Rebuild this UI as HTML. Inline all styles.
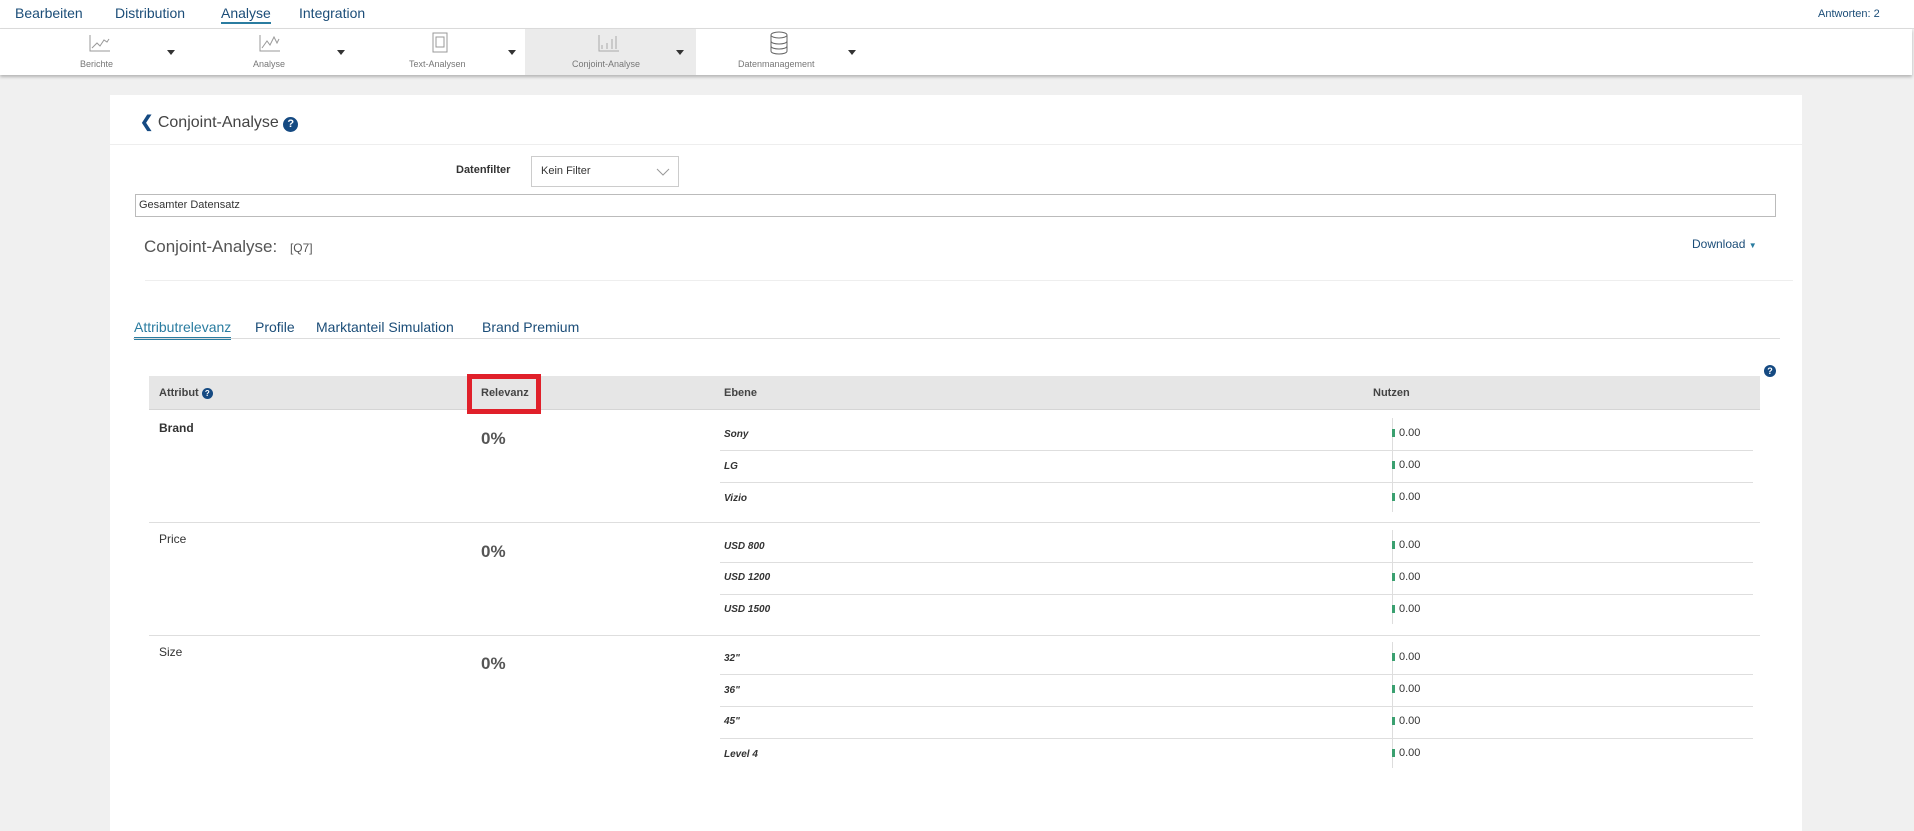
<!DOCTYPE html>
<html><head><meta charset="utf-8"><style>
*{margin:0;padding:0;box-sizing:border-box}
body{width:1914px;height:831px;overflow:hidden;background:#f0f0f0;font-family:"Liberation Sans",sans-serif;position:relative;color:#333}
.a{position:absolute;white-space:nowrap}
.nav{color:#1b4d78;font-size:14px;top:5px}
.tb{color:#777;font-size:9px;top:59px}
.car{width:0;height:0;border-left:4px solid transparent;border-right:4px solid transparent;border-top:5px solid #333;position:absolute;top:50px}
.lv{font-style:italic;font-weight:bold;font-size:10px;color:#333}
.v{font-size:11px;color:#333}
.bar{position:absolute;width:3px;height:8px;background:#3aa070}
.ln{position:absolute;height:1px;background:#dedede}
.q{display:inline-block;width:12px;height:12px;border-radius:50%;background:#154a82;color:#fff;font-size:9px;font-weight:bold;text-align:center;line-height:12px}
</style></head><body>
<div class="a" style="left:0;top:0;width:1914px;height:29px;background:#fff;border-bottom:1px solid #ddd"></div>
<div class="a nav" style="left:15px">Bearbeiten</div>
<div class="a nav" style="left:115px">Distribution</div>
<div class="a nav" style="left:221px;border-bottom:2px solid #2a7ca0;padding-bottom:1px">Analyse</div>
<div class="a nav" style="left:299px">Integration</div>
<div class="a" style="left:1818px;top:8px;font-size:11px;color:#1b4d78">Antworten: 2</div>
<div class="a" style="left:0;top:29px;width:1912px;height:46px;background:#fff;box-shadow:0 2px 3px rgba(0,0,0,.25)"></div>
<div class="a" style="left:525px;top:29px;width:171px;height:46px;background:#ebebeb"></div>
<svg class="a" style="left:88px;top:33px" width="24" height="20" fill="none" stroke="#999"><path d="M2 2V18H22M4 15l5-5 3 3 4-6 3 2 2-3"/></svg>
<svg class="a" style="left:258px;top:33px" width="24" height="20" fill="none" stroke="#999"><path d="M2 2V18H22M4 15l5-7 3 4 4-8 3 6 2-4"/></svg>
<svg class="a" style="left:431px;top:32px" width="18" height="22" fill="none" stroke="#999"><rect x="2" y="1" width="14" height="19"/><rect x="5" y="5" width="8" height="10"/></svg>
<svg class="a" style="left:597px;top:33px" width="24" height="20" fill="none" stroke="#aaa"><path d="M2 2V18H22M5 16v-4M10 16v-6M15 16V6M19 16V3"/></svg>
<svg class="a" style="left:769px;top:31px" width="20" height="24" fill="none" stroke="#666"><ellipse cx="10" cy="4" rx="8" ry="3"/><path d="M2 4v16c0 4 16 4 16 0V4M2 10c0 4 16 4 16 0M2 15c0 4 16 4 16 0"/></svg>
<div class="a tb" style="left:80px">Berichte</div>
<div class="a tb" style="left:253px">Analyse</div>
<div class="a tb" style="left:409px">Text-Analysen</div>
<div class="a tb" style="left:572px">Conjoint-Analyse</div>
<div class="a tb" style="left:738px">Datenmanagement</div>
<div class="car" style="left:167px"></div><div class="car" style="left:337px"></div><div class="car" style="left:508px"></div><div class="car" style="left:676px"></div><div class="car" style="left:848px"></div>

<div class="a" style="left:110px;top:95px;width:1692px;height:736px;background:#fff"></div>
<div class="a" style="left:140px;top:112px;font-size:16px;color:#444"><span style="color:#154a82;font-weight:bold">&#10094;</span> Conjoint-Analyse <span class="q" style="width:15px;height:15px;line-height:15px;font-size:11px">?</span></div>
<div class="ln" style="left:110px;top:144px;width:1692px;background:#eee"></div>
<div class="a" style="left:456px;top:164px;font-size:11px;font-weight:bold;color:#333">Datenfilter</div>
<div class="a" style="left:531px;top:156px;width:148px;height:31px;border:1px solid #ccc;font-size:11px;padding:8px 9px;color:#333">Kein Filter</div>
<svg class="a" style="left:656px;top:168px" width="14" height="8" fill="none" stroke="#999"><path d="M1 1l6 6 6-6"/></svg>
<div class="a" style="left:135px;top:194px;width:1641px;height:23px;border:1px solid #bbb;font-size:11px;padding:4px 3px">Gesamter Datensatz</div>
<div class="a" style="left:144px;top:237px;font-size:17px;color:#555">Conjoint-Analyse: <span style="font-size:12px;margin-left:8px">[Q7]</span></div>
<div class="a" style="left:1692px;top:237px;font-size:12px;color:#1b4d78">Download <span style="color:#2a7ca0;font-size:8px">&#9660;</span></div>
<div class="ln" style="left:145px;top:280px;width:1648px;background:#eee"></div>
<div class="a" style="left:134px;top:319px;font-size:14px;color:#2a7ca0;border-bottom:3px solid #2a7ca0;padding-bottom:2px">Attributrelevanz</div>
<div class="a" style="left:255px;top:319px;font-size:14px;color:#1b4d78">Profile</div>
<div class="a" style="left:316px;top:319px;font-size:14px;color:#1b4d78">Marktanteil Simulation</div>
<div class="a" style="left:482px;top:319px;font-size:14px;color:#1b4d78">Brand Premium</div>
<div class="ln" style="left:133px;top:338px;width:1647px;background:#ddd"></div>
<div class="a" style="left:1764px;top:361px"><span class="q">?</span></div>
<div class="a" style="left:149px;top:376px;width:1611px;height:34px;background:#e6e6e6;border-bottom:1px solid #d5d5d5"></div>
<div class="a" style="left:159px;top:387px;font-size:11px;font-weight:bold;color:#444">Attribut <span class="q" style="width:11px;height:11px;line-height:11px;font-size:8px">?</span></div>
<div class="a" style="left:467px;top:374px;width:74px;height:40px;border:5px solid #e0202a"></div>
<div class="a" style="left:481px;top:387px;font-size:11px;font-weight:bold;color:#444">Relevanz</div>
<div class="a" style="left:724px;top:387px;font-size:11px;font-weight:bold;color:#444">Ebene</div>
<div class="a" style="left:1373px;top:387px;font-size:11px;font-weight:bold;color:#444">Nutzen</div>

<div class="a" style="left:159px;top:421px;font-size:12px;font-weight:bold">Brand</div>
<div class="a" style="left:481px;top:429px;font-size:17px;font-weight:bold;color:#555">0%</div>
<div class="a" style="left:159px;top:532px;font-size:12px">Price</div>
<div class="a" style="left:481px;top:542px;font-size:17px;font-weight:bold;color:#555">0%</div>
<div class="a" style="left:159px;top:645px;font-size:12px">Size</div>
<div class="a" style="left:481px;top:654px;font-size:17px;font-weight:bold;color:#555">0%</div>

<div class="a lv" style="left:724px;top:429px">Sony</div>
<div class="a lv" style="left:724px;top:461px">LG</div>
<div class="a lv" style="left:724px;top:493px">Vizio</div>
<div class="a lv" style="left:724px;top:541px">USD 800</div>
<div class="a lv" style="left:724px;top:572px">USD 1200</div>
<div class="a lv" style="left:724px;top:604px">USD 1500</div>
<div class="a lv" style="left:724px;top:653px">32"</div>
<div class="a lv" style="left:724px;top:685px">36"</div>
<div class="a lv" style="left:724px;top:716px">45"</div>
<div class="a lv" style="left:724px;top:749px">Level 4</div>

<div class="ln" style="left:720px;top:450px;width:1033px"></div>
<div class="ln" style="left:720px;top:482px;width:1033px"></div>
<div class="ln" style="left:149px;top:522px;width:1611px"></div>
<div class="ln" style="left:720px;top:562px;width:1033px"></div>
<div class="ln" style="left:720px;top:594px;width:1033px"></div>
<div class="ln" style="left:149px;top:635px;width:1611px"></div>
<div class="ln" style="left:720px;top:674px;width:1033px"></div>
<div class="ln" style="left:720px;top:706px;width:1033px"></div>
<div class="ln" style="left:720px;top:738px;width:1033px"></div>

<div class="a" style="left:1392px;top:418px;width:1px;height:94px;background:#ddd"></div>
<div class="a" style="left:1392px;top:530px;width:1px;height:94px;background:#ddd"></div>
<div class="a" style="left:1392px;top:642px;width:1px;height:126px;background:#ddd"></div>

<div class="bar" style="left:1392px;top:429px"></div><div class="a v" style="left:1399px;top:427px">0.00</div>
<div class="bar" style="left:1392px;top:461px"></div><div class="a v" style="left:1399px;top:459px">0.00</div>
<div class="bar" style="left:1392px;top:493px"></div><div class="a v" style="left:1399px;top:491px">0.00</div>
<div class="bar" style="left:1392px;top:541px"></div><div class="a v" style="left:1399px;top:539px">0.00</div>
<div class="bar" style="left:1392px;top:573px"></div><div class="a v" style="left:1399px;top:571px">0.00</div>
<div class="bar" style="left:1392px;top:605px"></div><div class="a v" style="left:1399px;top:603px">0.00</div>
<div class="bar" style="left:1392px;top:653px"></div><div class="a v" style="left:1399px;top:651px">0.00</div>
<div class="bar" style="left:1392px;top:685px"></div><div class="a v" style="left:1399px;top:683px">0.00</div>
<div class="bar" style="left:1392px;top:717px"></div><div class="a v" style="left:1399px;top:715px">0.00</div>
<div class="bar" style="left:1392px;top:749px"></div><div class="a v" style="left:1399px;top:747px">0.00</div>
</body></html>
